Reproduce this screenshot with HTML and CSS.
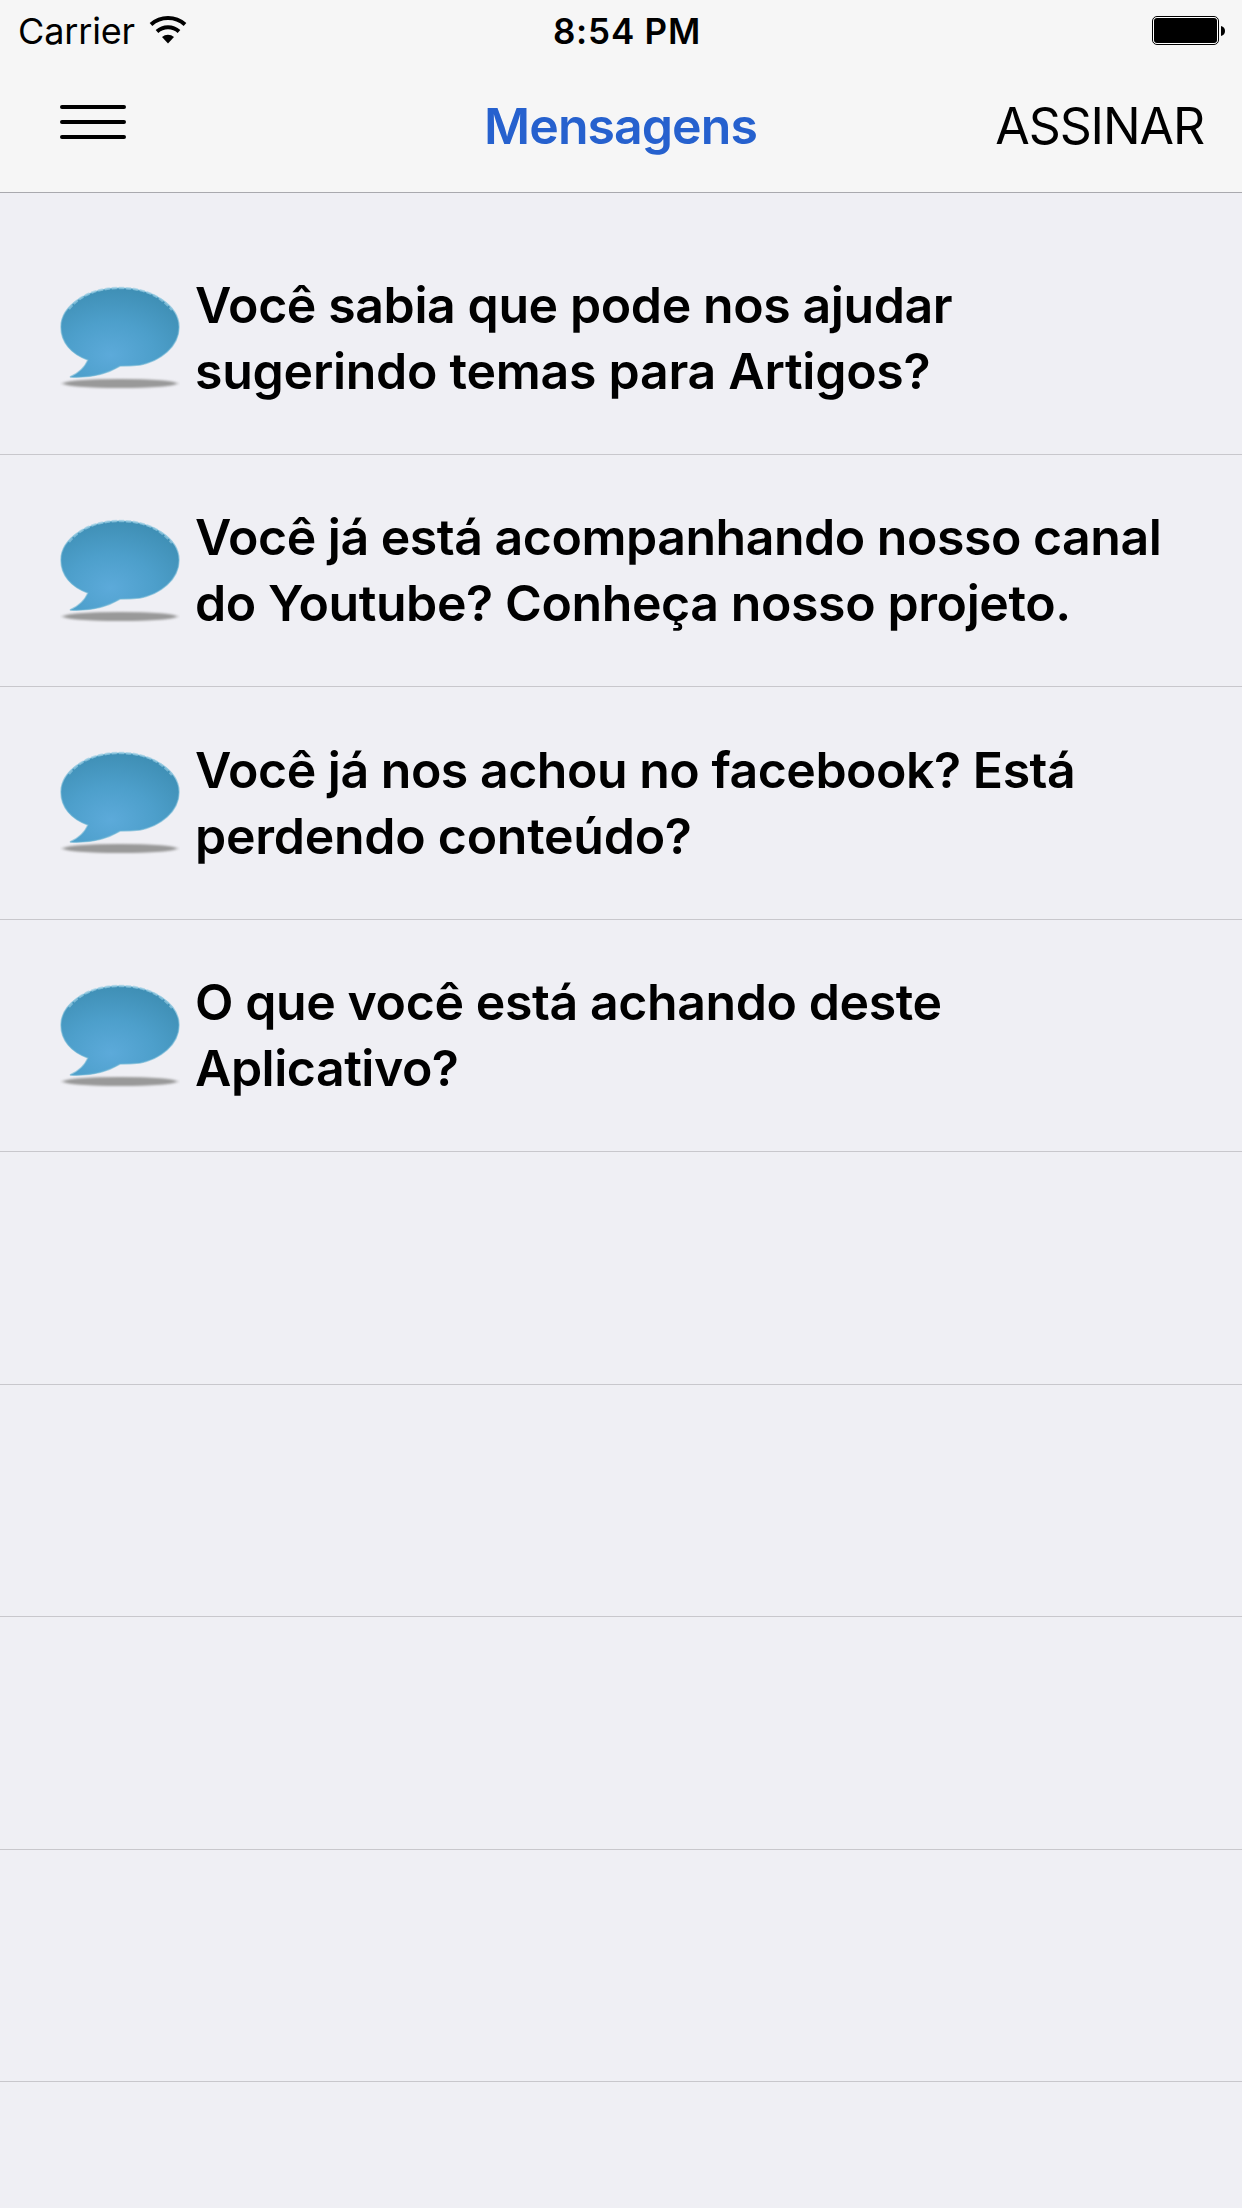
FILE: index.html
```html
<!DOCTYPE html>
<html lang="pt-BR">
<head>
<meta charset="utf-8">
<title>Mensagens</title>
<link rel="stylesheet" href="styles.css">
</head>
<body>
<svg class="defs" width="0" height="0" aria-hidden="true">
  <defs>
    <radialGradient id="bubble" cx="0.42" cy="0.75" r="0.75"><stop offset="0" stop-color="#5caada"/><stop offset="0.5" stop-color="#4d9fcb"/><stop offset="1" stop-color="#3f8fb5"/></radialGradient>
    <filter id="soft" x="-10%" y="-100%" width="120%" height="300%"><feGaussianBlur stdDeviation="2 1.3"/></filter>
    <symbol id="chat" viewBox="0 0 120 110">
      <ellipse cx="60" cy="98.500" rx="57" ry="4.500" fill="#999" filter="url(#soft)"/>
      <path d="M60 3C93 3 119 21 119 42C119 62 100 76 80 80Q71 81 60 81C45 90 29 93 10 92C19 88 25 82 28 75C11 69 1 57 1 42C1 21 27 3 60 3Z" fill="url(#bubble)" stroke="#6ab4d4" stroke-opacity="0.6" stroke-width="1.5"/>
      <path d="M9 24C21 9 39 3 60 3S99 9 112 25" fill="none" stroke="#9bcfe4" stroke-width="2.5" stroke-dasharray="5 2" opacity="0.6"/>
    </symbol>
  </defs>
</svg>
<header class="header">
  <div class="status">
    <div class="carrier"><span class="carrier-name">Carrier</span>
      <svg class="wifi" width="38" height="28" viewBox="0 0 38 28"><path d="M19 27.500l-6-6.500a9.500 9.500 0 0 1 12 0z"/><path d="M2 8.500a25.500 25.500 0 0 1 34 0M8 15.500a16.500 16.500 0 0 1 22 0" fill="none" stroke="#000" stroke-width="4"/></svg>
    </div>
    <span class="clock">8:54 PM</span>
    <svg class="battery" width="73" height="29" viewBox="0 0 73 29"><rect x="0.5" y="0.5" width="66" height="28" rx="4.500" fill="#fff" stroke="#000"/><rect x="2" y="2" width="63" height="25" rx="3"/><path d="M69 10q4 1 4 5t-4 5z"/></svg>
  </div>
  <nav class="nav">
    <svg class="menu" width="66" height="34" viewBox="0 0 66 34"><path d="M2 2H64M2 17H64M2 32H64" stroke="#000" stroke-width="4" stroke-linecap="round"/></svg>
    <h1 class="title">Mensagens</h1>
    <span class="subscribe">ASSINAR</span>
  </nav>
</header>
<main class="list">
  <div class="row"><svg class="chat"><use href="#chat"/></svg><p class="text"><span>Você sabia que pode nos ajudar</span><br><span class="loose">sugerindo temas para Artigos?</span></p></div>
  <div class="row"><svg class="chat"><use href="#chat"/></svg><p class="text"><span class="tight">Você já está acompanhando nosso canal</span><br><span>do Youtube? Conheça nosso projeto.</span></p></div>
  <div class="row"><svg class="chat"><use href="#chat"/></svg><p class="text"><span class="tight">Você já nos achou no facebook? Está</span><br><span class="loose">perdendo conteúdo?</span></p></div>
  <div class="row"><svg class="chat"><use href="#chat"/></svg><p class="text"><span>O que você está achando deste</span><br><span class="tight">Aplicativo?</span></p></div>
  <div class="row"></div><div class="row"></div><div class="row"></div><div class="row"></div>
</main>
</body>
</html>
```
FILE: styles.css
```css
* { box-sizing: border-box; }
body { margin: 0; height: 2208px; overflow: hidden; background: #efeff4; color: #000; font-family: Inter, sans-serif; }
.defs { display: block; }
.header { height: 193px; background: #f6f6f6; border-bottom: 1px solid #a9a9ae; }
.status { height: 60px; display: grid; grid-template-columns: 1fr auto 1fr; align-items: center; padding: 0 17px 0 18px; }
.carrier { display: flex; align-items: center; gap: 14px; font-size: 36px; letter-spacing: -0.15px; }
.carrier-name { padding-top: 2px; }
.clock { padding: 2px 0 0 11px; font-size: 35px; font-weight: 600; letter-spacing: 0.8px; }
.battery { justify-self: end; }
.nav { height: 132px; display: grid; grid-template-columns: minmax(0, 1fr) auto minmax(0, 1fr); align-items: center; padding: 0 38px 0 60px; }
.menu { margin-bottom: 8px; }
.title { margin: 0 23px 0 0; font-size: 50px; font-weight: 600; letter-spacing: -0.95px; color: #2661ce; }
.subscribe { justify-self: end; font-size: 50px; letter-spacing: -1.1px; }
.list { padding-top: 29px; }
.row { height: 232.500px; display: flex; align-items: center; padding-left: 60px; gap: 15px; border-bottom: 1px solid #c8c7cc; }
.chat { width: 120px; height: 110px; flex: none; margin-top: 5px; }
.text { margin: 0; font-size: 50px; font-weight: 600; line-height: 66px; letter-spacing: -0.4px; white-space: nowrap; }
.tight { letter-spacing: -0.48px; }
.loose { letter-spacing: -0.26px; }
```
